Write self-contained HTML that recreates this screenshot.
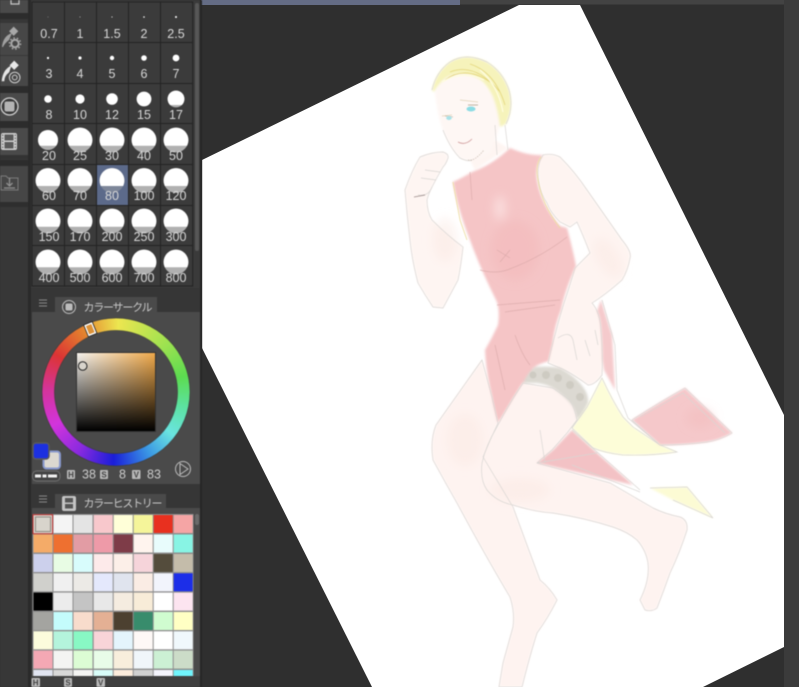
<!DOCTYPE html>
<html><head><meta charset="utf-8"><style>
html,body{margin:0;padding:0;width:799px;height:687px;overflow:hidden;background:#2f2f2f}
svg{position:absolute;left:0;top:0}
#panel{position:absolute;left:0;top:0;width:202px;height:687px;overflow:hidden;filter:blur(.4px)}
.wheel{position:absolute;left:42px;top:318px;width:148px;height:148px;border-radius:50%;background:conic-gradient(from 2deg,#ece650,#9ce250 45deg,#5cdc50 75deg,#5ce2a0 100deg,#6ae4e0 125deg,#3a96e4 150deg,#1a1ed8 180deg,#8a2ae0 210deg,#d234dc 240deg,#d4349a 270deg,#dc3434 300deg,#e4842e 330deg,#ece650);-webkit-mask:radial-gradient(circle,transparent 61px,#000 62px);mask:radial-gradient(circle,transparent 61px,#000 62px)}
.sq{position:absolute;left:77px;top:353px;width:78px;height:78px;background:linear-gradient(to bottom,transparent,#000),linear-gradient(to right,#f6f3ee,#f0a94a);box-shadow:0 0 0 1px #333}
</style></head><body>
<svg width="799" height="687" viewBox="0 0 799 687">
<defs>
<filter id="b" x="-10%" y="-10%" width="120%" height="120%"><feGaussianBlur stdDeviation="1.3"/></filter>
<filter id="b2" x="-30%" y="-30%" width="160%" height="160%"><feGaussianBlur stdDeviation="5"/></filter>
<filter id="s" x="-5%" y="-5%" width="110%" height="110%"><feGaussianBlur stdDeviation=".4"/></filter>
<path id="dress" d="M453,182 Q462,178 472,172 Q492,165 510,148 Q528,156 543,155 Q535,165 537,180 Q541,205 560,226 L567,228 Q573,250 576,266 Q565,290 561,310 Q555,325 553,340 Q552,352 549,361 Q538,364 533,368 Q527,378 520,387 Q510,405 498,423 Q493,405 492,397 Q486,372 485,350 Q492,338 498,325 Q500,312 497,302 Q480,268 470,240 Q458,210 453,182 Z"/>
<path id="hair" d="M432,90 Q436,72 450,62 Q466,52 487,62 Q503,72 509,90 Q514,108 506,124 L500,127 Q498,110 493,97 Q486,82 476,77 Q460,70 446,78 Q438,84 434,92 Z"/>
<path id="face" d="M435,93 Q438,118 443,130 Q450,148 460,158 Q468,162 472,160 Q482,158 490,153 Q497,138 500,123 Q499,108 493,97 Q484,82 476,77 Q460,70 446,78 Q438,84 435,93 Z"/>
<path id="farleg" d="M482,360 Q455,398 436,425 Q430,440 433,460 Q445,482 457,503 Q485,555 510,597 Q515,612 513,627 Q508,645 503,663 L499,687 L522,687 Q530,655 537,633 Q548,618 557,600 Q550,588 540,580 Q525,540 513,507 L483,457 Q490,440 498,423 L492,397 Z"/>
<path id="thigh" d="M523,383 Q508,405 497,427 Q486,445 482,463 Q480,480 487,490 Q497,502 513,505 Q535,512 553,513 Q585,518 613,527 Q628,532 637,540 Q646,550 648,563 Q650,580 640,600 L645,610 Q652,612 657,608 Q664,590 670,573 Q680,552 687,530 Q688,520 680,517 Q665,514 653,508 L610,483 L537,463 L552,450 L567,433 L577,420 Q575,408 570,400 L553,388 Z"/>
<path id="arm" d="M543,155 Q552,153 560,157 Q575,172 587,190 L622,240 Q632,252 630,258 Q628,270 622,280 Q605,295 592,303 Q600,312 601,330 Q603,355 602,375 Q595,385 588,385 Q570,372 560,368 L548,363 Q552,345 555,335 Q560,315 565,300 Q570,285 575,268 Q583,260 590,253 Q583,235 577,222 L570,227 L560,222 Q550,212 547,203 Q538,190 538,173 Q538,162 543,155 Z"/>
<path id="larm" d="M405,190 Q412,170 420,157 Q432,152 443,152 Q449,154 448,158 Q446,164 443,167 Q437,177 432,187 Q428,195 427,200 Q427,212 432,220 Q448,236 463,247 Q461,265 458,280 Q450,295 443,308 L433,307 Q425,295 418,283 Q412,260 410,240 Q407,215 405,190 Z"/>
<path id="cloth" d="M632,420 Q660,402 685,388 Q710,412 732,433 Q720,440 707,442 Q685,445 660,445 Z"/>
<path id="yel" d="M602,378 Q612,400 623,417 L633,427 L660,445 L677,452 Q650,456 623,455 Q605,453 593,448 L572,428 L587,407 Z"/>
<path id="garter" d="M523,383 Q528,372 535,367 Q550,366 560,368 Q575,376 583,387 Q589,395 588,403 Q584,412 577,420 Q575,408 570,403 Q562,394 553,388 Q545,384 537,383 Z"/>
</defs>
<rect width="799" height="687" fill="#2f2f2f"/>
<polygon points="202,160 519,5 580,5 784,415 784,647 703,687 372,687 202,348" fill="#fff"/>
<rect x="201" y="0" width="598" height="4.5" fill="#434343"/>
<rect x="201" y="0" width="259" height="5" fill="#646c85"/>
<rect x="784" y="0" width="15" height="687" fill="#3b3b3b"/>

<!-- artwork -->
<g filter="url(#b)">
<use href="#yel" fill="#fdfdd8"/>
<polygon points="650,488 687,487 713,518 673,500" fill="#fcfbd4"/>
<use href="#cloth" fill="#f5c8ca"/>
<polygon points="572,430 597,453 633,485 620,482 537,463 553,450" fill="#f3c2c5"/>
<polygon points="601,300 612,335 615,390 604,370 600,345 590,330" fill="#f5cacc"/>
<use href="#farleg" fill="#fef3f0"/>
<use href="#dress" fill="#f5c5c6"/>
<use href="#thigh" fill="#fef3f0"/>
<use href="#arm" fill="#fef4f1"/>
<use href="#larm" fill="#fef5f2"/>
<polygon points="470,160 495,140 508,148 475,170" fill="#fef5f2"/>
<use href="#face" fill="#fef7f4"/>
<use href="#hair" fill="#f6f3bb"/>
<use href="#garter" fill="#dcd9d2"/>
</g>
<g fill="#cbc8bf" filter="url(#s)" opacity=".8">
<circle cx="533" cy="375" r="3.5"/><circle cx="546" cy="375" r="4"/><circle cx="558" cy="378" r="4"/><circle cx="570" cy="385" r="4"/><circle cx="580" cy="397" r="4"/>
</g>
<g filter="url(#b2)">
<ellipse cx="515" cy="250" rx="24" ry="30" fill="#f1b6b8" opacity=".45"/>
<ellipse cx="500" cy="208" rx="5" ry="12" fill="#fbe0e0"/>
<ellipse cx="445" cy="240" rx="12" ry="22" fill="#fbe9e3" opacity=".5"/>
<ellipse cx="608" cy="258" rx="11" ry="22" fill="#fbe9e3" opacity=".5" transform="rotate(-30 608 258)"/>
<ellipse cx="465" cy="440" rx="18" ry="26" fill="#fce9e4" opacity=".5"/>
<ellipse cx="520" cy="490" rx="30" ry="12" fill="#fce9e4" opacity=".5"/>
<ellipse cx="700" cy="418" rx="14" ry="10" fill="#f1b6b8" opacity=".35"/>
</g>
<g fill="none" stroke="#d9d6d3" stroke-width=".7" filter="url(#s)">
<use href="#farleg"/><use href="#thigh"/><use href="#arm"/><use href="#larm"/><use href="#cloth"/><use href="#yel"/>
<path d="M640,417 L683,393 L725,433 M650,488 L687,487 L713,518 L673,500"/>
<path d="M418,195 Q428,197 432,187 M425,170 L440,172 M421,178 L436,180"/>
<path d="M443,130 Q450,148 460,158 Q468,162 472,160 M495,125 L497,155 M505,125 L508,150"/>
<path d="M432,90 Q436,72 450,62 Q466,52 487,62 Q503,72 509,90 Q514,108 506,124"/>
<path d="M558,338 Q570,330 573,340 L577,360 M585,340 L590,356 M595,330 L598,345 M602,300 L615,345 L617,390 L628,418 L660,445"/>
<path d="M540,430 L545,463 M537,463 L597,453 M572,430 L640,490 M572,465 L640,492"/>
</g>
<g fill="none" stroke="#d8a8a8" stroke-width=".7" filter="url(#s)" opacity=".8">
<path d="M470,172 L472,200 M480,270 Q495,274 507,270 Q540,258 567,237 M497,305 L560,300 M505,312 L555,305 M495,345 L505,390 M515,335 Q522,355 530,365 M497,250 L510,258 M500,262 L510,250"/>
</g>
<g fill="none" stroke-width=".8" filter="url(#s)">
<path d="M445,80 Q465,65 490,82 M450,72 Q475,62 500,92 M470,64 Q495,72 505,105" stroke="#e4d67c"/>
<path d="M442,82 Q462,70 484,80 M480,70 Q498,85 503,112" stroke="#fffde0" stroke-width="1.2"/>
<path d="M453,182 L460,220 L467,240" stroke="#ecdc9c"/>
<path d="M541,157 Q535,165 538,180 Q542,205 560,228" stroke="#ecdc9c"/>
<path d="M414,197 L425,195" stroke="#9a8a88"/>
<path d="M458,142 Q465,146 472,139" stroke="#cf9a9a"/>
<path d="M442,116 L452,115 M460,100 L478,102" stroke="#e0d2b8"/>
<path d="M468,105 L478,105" stroke="#b0a090"/>
<path d="M445,116 L453,117" stroke="#b0a090" stroke-width=".6"/>
<path d="M468,160 Q474,162 484,150" stroke="#cfc2b8" stroke-dasharray="1.5 1"/>
</g>
<g filter="url(#s)"><ellipse cx="471" cy="109" rx="4.5" ry="2.5" fill="#8cdce4"/>
<ellipse cx="449" cy="118" rx="2.8" ry="2" fill="#a9e2e8"/></g>
</svg>

<div id="panel">
<svg width="202" height="687" viewBox="0 0 202 687" font-family="'Liberation Sans','Noto Sans CJK JP',sans-serif">
<defs>
<clipPath id="c3"><rect x="160" y="85" width="33" height="20"/></clipPath>
<clipPath id="c4"><rect x="30" y="120" width="165" height="25.7"/></clipPath>
<clipPath id="c5"><rect x="30" y="165" width="165" height="21"/></clipPath>
<clipPath id="c6"><rect x="30" y="206" width="165" height="20.7"/></clipPath>
<clipPath id="c7"><rect x="30" y="246" width="165" height="21.3"/></clipPath>
</defs>
<rect x="0" y="0" width="202" height="687" fill="#383838"/>

<!-- left toolbar -->
<rect x="0" y="0" width="28" height="687" fill="#373737"/>
<rect x="28" y="0" width="3" height="687" fill="#2a2a2a"/>
<rect x="0" y="0" width="28" height="13" fill="#4a4a4a"/>
<rect x="0" y="13" width="28" height="6" fill="#2c2c2c"/>
<rect x="0" y="23" width="28" height="32" fill="#474747"/>
<rect x="0" y="56" width="28" height="30" fill="#474747"/>
<rect x="0" y="86" width="28" height="7" fill="#2c2c2c"/>
<rect x="0" y="93" width="28" height="28" fill="#4a4a4a"/>
<rect x="0" y="121" width="28" height="7" fill="#2c2c2c"/>
<rect x="0" y="128" width="28" height="27" fill="#4a4a4a"/>
<rect x="0" y="155" width="28" height="4" fill="#333"/>
<rect x="0" y="160" width="28" height="6" fill="#2c2c2c"/>
<rect x="0" y="166" width="28" height="36" fill="#464646"/>
<rect x="0" y="202" width="28" height="5" fill="#2e2e2e"/>
<!-- toolbar icons -->
<path d="M11,0 L11,4 L19,4 L19,0" stroke="#c8c8c8" stroke-width="1.2" fill="none"/>
<path d="M2,47 Q3,36 12,33 L9,40 Q5,43 3,47 Z" fill="#a0a0a0"/>
<rect x="10.5" y="28" width="6.5" height="6.5" transform="rotate(45 13.7 31.2)" fill="#a8a8a8"/>
<circle cx="15" cy="43.5" r="3.7" fill="none" stroke="#a8a8a8" stroke-width="2"/>
<circle cx="15" cy="43.5" r="5.6" fill="none" stroke="#a8a8a8" stroke-width="1.4" stroke-dasharray="1.6 1.9"/>
<path d="M2,81 Q3,70 11,66 L9,72 Q4,76 4,81 Z" fill="#e4e4e4" stroke="#e4e4e4" stroke-width=".6"/>
<rect x="11" y="62" width="6.5" height="6.5" transform="rotate(45 14.2 65.2)" fill="#e8e8e8"/>
<circle cx="14.7" cy="77.5" r="5.3" fill="#444" stroke="#cfcfcf" stroke-width="1"/>
<circle cx="14.7" cy="77.5" r="2.4" fill="none" stroke="#cfcfcf"/>
<circle cx="9.5" cy="106.5" r="8.5" fill="#3a3a3a" stroke="#cfcfcf" stroke-width="1.3"/>
<rect x="4.5" y="101.5" width="10" height="10" rx="2" fill="#b4b4b4"/>
<rect x="1" y="133" width="16" height="17" rx="2" fill="#cfcfcf"/>
<rect x="4.5" y="134.5" width="9" height="6" fill="#5a5a5a"/><rect x="4.5" y="142" width="9" height="6.5" fill="#5a5a5a"/>
<path d="M2.7,134.5 V149 M15.3,134.5 V149" stroke="#6a6a6a" stroke-width="1.2" stroke-dasharray="1.5 1.5"/>
<path d="M1,176 L1,190 L18,190 L18,178 L8,178 L6,176 Z" fill="none" stroke="#7c7c7c" stroke-width="1"/>
<path d="M9.5,178 V186 M6.5,183 L9.5,186 L12.5,183 M4,188 H15" fill="none" stroke="#909090" stroke-width="1.3"/>

<!-- brush panel -->
<rect x="31" y="0" width="170" height="296" fill="#3a3a3a"/>
<rect x="195" y="3" width="4" height="248" rx="2" fill="#575757"/>
<rect x="32" y="2" width="160.7" height="284" fill="#3b3b3b" stroke="#232323" stroke-width="1"/>
<path d="M64.5,2 V286 M96.5,2 V286 M128.5,2 V286 M160.5,2 V286 M32,42.5 H193 M32,83.5 H193 M32,123.5 H193 M32,164.5 H193 M32,205.5 H193 M32,245.5 H193" stroke="#232323" stroke-width="1"/>
<rect x="97" y="165" width="31" height="40" fill="#5c6a8a"/>

<g fill="#fff">
<circle cx="48" cy="17" r=".4" opacity=".6"/><circle cx="80" cy="17" r=".5" opacity=".7"/><circle cx="112" cy="17" r=".6" opacity=".8"/><circle cx="144" cy="17" r=".8"/><circle cx="176" cy="17" r="1"/>
<circle cx="48" cy="58" r="1.1"/><circle cx="80" cy="58" r="1.6"/><circle cx="112" cy="58" r="2.2"/><circle cx="144" cy="58" r="2.8"/><circle cx="176" cy="58" r="3.4"/>
<circle cx="48" cy="99" r="3.8"/><circle cx="80" cy="99" r="4.6"/><circle cx="112" cy="99" r="5.8"/><circle cx="144" cy="99" r="7.4"/>
</g>
<circle cx="176" cy="99" r="8.4" fill="#b0b0b0"/>
<circle cx="176" cy="99" r="8.4" fill="#fff" clip-path="url(#c3)"/>
<g fill="#b0b0b0">
<circle cx="48" cy="140" r="10"/><circle cx="80" cy="140" r="12.4"/><circle cx="112" cy="140" r="12.4"/><circle cx="144" cy="140" r="12.4"/><circle cx="176" cy="140" r="12.4"/>
<circle cx="48" cy="180.5" r="12.4"/><circle cx="80" cy="180.5" r="12.4"/><circle cx="112" cy="180.5" r="12.4"/><circle cx="144" cy="180.5" r="12.4"/><circle cx="176" cy="180.5" r="12.4"/>
<circle cx="48" cy="221" r="12.4"/><circle cx="80" cy="221" r="12.4"/><circle cx="112" cy="221" r="12.4"/><circle cx="144" cy="221" r="12.4"/><circle cx="176" cy="221" r="12.4"/>
<circle cx="48" cy="262" r="12.4"/><circle cx="80" cy="262" r="12.4"/><circle cx="112" cy="262" r="12.4"/><circle cx="144" cy="262" r="12.4"/><circle cx="176" cy="262" r="12.4"/>
</g>
<g fill="#fff" clip-path="url(#c4)"><circle cx="48" cy="140" r="10"/><circle cx="80" cy="140" r="12.4"/><circle cx="112" cy="140" r="12.4"/><circle cx="144" cy="140" r="12.4"/><circle cx="176" cy="140" r="12.4"/></g>
<g fill="#fff" clip-path="url(#c5)"><circle cx="48" cy="180.5" r="12.4"/><circle cx="80" cy="180.5" r="12.4"/><circle cx="112" cy="180.5" r="12.4"/><circle cx="144" cy="180.5" r="12.4"/><circle cx="176" cy="180.5" r="12.4"/></g>
<g fill="#fff" clip-path="url(#c6)"><circle cx="48" cy="221" r="12.4"/><circle cx="80" cy="221" r="12.4"/><circle cx="112" cy="221" r="12.4"/><circle cx="144" cy="221" r="12.4"/><circle cx="176" cy="221" r="12.4"/></g>
<g fill="#fff" clip-path="url(#c7)"><circle cx="48" cy="262" r="12.4"/><circle cx="80" cy="262" r="12.4"/><circle cx="112" cy="262" r="12.4"/><circle cx="144" cy="262" r="12.4"/><circle cx="176" cy="262" r="12.4"/></g>
<rect x="100" y="186" width="24" height="17" fill="#5c6a8a" opacity=".6"/>

<g fill="#d8d8d8" font-size="12.5" text-anchor="middle">
<text x="49" y="38">0.7</text><text x="80" y="38">1</text><text x="112" y="38">1.5</text><text x="144" y="38">2</text><text x="176" y="38">2.5</text>
<text x="49" y="78">3</text><text x="80" y="78">4</text><text x="112" y="78">5</text><text x="144" y="78">6</text><text x="176" y="78">7</text>
<text x="49" y="119">8</text><text x="80" y="119">10</text><text x="112" y="119">12</text><text x="144" y="119">15</text><text x="176" y="119">17</text>
<text x="49" y="160">20</text><text x="80" y="160">25</text><text x="112" y="160">30</text><text x="144" y="160">40</text><text x="176" y="160">50</text>
<text x="49" y="200">60</text><text x="80" y="200">70</text><text x="112" y="200">80</text><text x="144" y="200">100</text><text x="176" y="200">120</text>
<text x="49" y="241">150</text><text x="80" y="241">170</text><text x="112" y="241">200</text><text x="144" y="241">250</text><text x="176" y="241">300</text>
<text x="49" y="282">400</text><text x="80" y="282">500</text><text x="112" y="282">600</text><text x="144" y="282">700</text><text x="176" y="282">800</text>
</g>

<!-- colour panel -->
<rect x="31" y="288" width="170" height="400" fill="#363636"/>
<rect x="55" y="297" width="102" height="16" fill="#4a4a4a"/>
<rect x="32" y="312" width="168" height="172" fill="#4a4a4a"/>
<path d="M39,300 H47 M39,303 H47 M39,306 H47" stroke="#8a8a8a" stroke-width="1"/>
<circle cx="69" cy="307" r="6.5" fill="none" stroke="#bdbdbd" stroke-width="1"/>
<rect x="65.5" y="303.5" width="7" height="7" rx="1.5" fill="#bdbdbd"/>
<text x="83.5" y="311" font-size="11" fill="#c8c8c8" textLength="69">カラーサークル</text>
</svg>

<div class="wheel"></div>
<div class="sq"></div>

<svg width="202" height="687" viewBox="0 0 202 687" font-family="'Liberation Sans','Noto Sans CJK JP',sans-serif">
<circle cx="116" cy="392" r="74" fill="none" stroke="#3a3a3a" stroke-width="1" opacity=".6"/>
<circle cx="116" cy="392" r="61.5" fill="none" stroke="#3a3a3a" stroke-width="1" opacity=".6"/>
<rect x="85.2" y="322.5" width="10" height="13.5" transform="rotate(-22 90 329)" fill="#222"/>
<rect x="86" y="323.3" width="8.4" height="11.9" transform="rotate(-22 90 329)" fill="#fff"/>
<rect x="87.3" y="324.8" width="5.8" height="8.9" transform="rotate(-22 90 329)" fill="#dc9238"/>
<circle cx="82.7" cy="366" r="4.3" fill="#d8d4cc" stroke="#222" stroke-width="1"/>

<!-- fg/bg swatches -->
<rect x="43.5" y="451.5" width="16.5" height="17" rx="3" fill="#dcd8d0" stroke="#8898cc" stroke-width="2"/>
<rect x="33" y="443" width="16" height="16" rx="3" fill="#1c30e0" stroke="#5a5a5a" stroke-width="1.5"/>
<rect x="32.5" y="471" width="27.5" height="10" rx="4" fill="#444" stroke="#707070"/>
<path d="M35,476 H57" stroke="#f2f2f2" stroke-width="3" stroke-dasharray="6 1.5 4 1.5 9"/>

<!-- HSV -->
<g fill="#b8b8b8"><rect x="67" y="470" width="8" height="9" rx="1"/><rect x="100" y="470" width="8" height="9" rx="1"/><rect x="132" y="470" width="8.5" height="9" rx="1"/></g>
<g font-size="8" fill="#444" text-anchor="middle" font-weight="bold"><text x="71" y="477.7">H</text><text x="104" y="477.7">S</text><text x="136.3" y="477.7">V</text></g>
<g font-size="12.5" fill="#cccccc"><text x="82" y="478.5">38</text><text x="119" y="478.5">8</text><text x="147" y="478.5">83</text></g>
<circle cx="183" cy="469" r="7.5" fill="none" stroke="#bbb" stroke-width="1"/>
<path d="M180,463.5 L188,469 L180,474.5 Z" fill="none" stroke="#bbb" stroke-width="1"/>

<!-- history panel -->
<rect x="55" y="494" width="111" height="15" fill="#4a4a4a"/>
<rect x="32" y="508" width="168" height="168" fill="#4a4a4a"/>
<path d="M39,496 H47 M39,499 H47 M39,502 H47" stroke="#8a8a8a" stroke-width="1"/>
<rect x="62" y="496" width="14" height="15" rx="2" fill="#c4c4c4"/>
<rect x="65" y="498" width="8" height="4.5" fill="#555"/><rect x="65" y="504" width="8" height="4.5" fill="#555"/>
<text x="83.5" y="507" font-size="11" fill="#c8c8c8" textLength="79">カラーヒストリー</text>
<rect x="195" y="514" width="4" height="11" rx="2" fill="#6a6a6a"/>

<rect x="32.5" y="514" width="161" height="162" fill="#8e8e8e"/>
<rect x="53.5" y="515" width="19" height="18" fill="#f4f4f4"/><rect x="73.5" y="515" width="19" height="18" fill="#e4e4e4"/><rect x="93.7" y="515" width="19" height="18" fill="#f8c8cc"/><rect x="113.7" y="515" width="19" height="18" fill="#ffffd8"/><rect x="133.7" y="515" width="19" height="18" fill="#f5f59a"/><rect x="153.7" y="515" width="19" height="18" fill="#e8301f"/><rect x="173.7" y="515" width="19" height="18" fill="#f5a5a5"/>
<rect x="33.5" y="534.5" width="19" height="18" fill="#f4ab68"/><rect x="53.5" y="534.5" width="19" height="18" fill="#ee7030"/><rect x="73.5" y="534.5" width="19" height="18" fill="#e29ca4"/><rect x="93.7" y="534.5" width="19" height="18" fill="#ee9aa8"/><rect x="113.7" y="534.5" width="19" height="18" fill="#7e3c48"/><rect x="133.7" y="534.5" width="19" height="18" fill="#fff4ee"/><rect x="153.7" y="534.5" width="19" height="18" fill="#e8fcfc"/><rect x="173.7" y="534.5" width="19" height="18" fill="#88f4e4"/>
<rect x="33.5" y="554" width="19" height="18" fill="#ccd0ec"/><rect x="53.5" y="554" width="19" height="18" fill="#e8fce4"/><rect x="73.5" y="554" width="19" height="18" fill="#d8fcfc"/><rect x="93.7" y="554" width="19" height="18" fill="#fdeaea"/><rect x="113.7" y="554" width="19" height="18" fill="#fcefe8"/><rect x="133.7" y="554" width="19" height="18" fill="#f6d4da"/><rect x="153.7" y="554" width="19" height="18" fill="#544c3c"/><rect x="173.7" y="554" width="19" height="18" fill="#c4bcaa"/>
<rect x="33.5" y="573.3" width="19" height="18" fill="#d0d0cc"/><rect x="53.5" y="573.3" width="19" height="18" fill="#f0f0f0"/><rect x="73.5" y="573.3" width="19" height="18" fill="#eceae6"/><rect x="93.7" y="573.3" width="19" height="18" fill="#e4e8fc"/><rect x="113.7" y="573.3" width="19" height="18" fill="#e0e4ee"/><rect x="133.7" y="573.3" width="19" height="18" fill="#faece4"/><rect x="153.7" y="573.3" width="19" height="18" fill="#f2f4fc"/><rect x="173.7" y="573.3" width="19" height="18" fill="#1c2ee8"/>
<rect x="33.5" y="592.6" width="19" height="18" fill="#000"/><rect x="53.5" y="592.6" width="19" height="18" fill="#ececec"/><rect x="73.5" y="592.6" width="19" height="18" fill="#c4c4c4"/><rect x="93.7" y="592.6" width="19" height="18" fill="#e8e8e8"/><rect x="113.7" y="592.6" width="19" height="18" fill="#f5ece0"/><rect x="133.7" y="592.6" width="19" height="18" fill="#f8ecd8"/><rect x="153.7" y="592.6" width="19" height="18" fill="#fff"/><rect x="173.7" y="592.6" width="19" height="18" fill="#fce4f0"/>
<rect x="33.5" y="612" width="19" height="18" fill="#a4a4a0"/><rect x="53.5" y="612" width="19" height="18" fill="#c4fcfc"/><rect x="73.5" y="612" width="19" height="18" fill="#f8dccc"/><rect x="93.7" y="612" width="19" height="18" fill="#e4b094"/><rect x="113.7" y="612" width="19" height="18" fill="#4c4030"/><rect x="133.7" y="612" width="19" height="18" fill="#388c6c"/><rect x="153.7" y="612" width="19" height="18" fill="#d0fcd0"/><rect x="173.7" y="612" width="19" height="18" fill="#ffffc4"/>
<rect x="33.5" y="631.3" width="19" height="18" fill="#fcfcdc"/><rect x="53.5" y="631.3" width="19" height="18" fill="#b4f4dc"/><rect x="73.5" y="631.3" width="19" height="18" fill="#88f8c4"/><rect x="93.7" y="631.3" width="19" height="18" fill="#f8d4d8"/><rect x="113.7" y="631.3" width="19" height="18" fill="#e4f4fc"/><rect x="133.7" y="631.3" width="19" height="18" fill="#fef8f6"/><rect x="153.7" y="631.3" width="19" height="18" fill="#fff"/><rect x="173.7" y="631.3" width="19" height="18" fill="#f0f8fc"/>
<rect x="33.5" y="650.6" width="19" height="18" fill="#f4a8b4"/><rect x="53.5" y="650.6" width="19" height="18" fill="#f4f4f2"/><rect x="73.5" y="650.6" width="19" height="18" fill="#dcfcd4"/><rect x="93.7" y="650.6" width="19" height="18" fill="#e8fce8"/><rect x="113.7" y="650.6" width="19" height="18" fill="#f8eedc"/><rect x="133.7" y="650.6" width="19" height="18" fill="#f0f6fa"/><rect x="153.7" y="650.6" width="19" height="18" fill="#ccf0d4"/><rect x="173.7" y="650.6" width="19" height="18" fill="#ccdcc8"/>
<rect x="33.5" y="670" width="19" height="6" fill="#e0e4f0"/><rect x="53.5" y="670" width="19" height="6" fill="#d8d8d8"/><rect x="73.5" y="670" width="19" height="6" fill="#f4f4f2"/><rect x="93.7" y="670" width="19" height="6" fill="#d8fcf8"/><rect x="113.7" y="670" width="19" height="6" fill="#fcecdc"/><rect x="133.7" y="670" width="19" height="6" fill="#d0d0d0"/><rect x="153.7" y="670" width="19" height="6" fill="#f4f4fc"/><rect x="173.7" y="670" width="19" height="6" fill="#70f4fc"/>
<rect x="33" y="514.7" width="19.6" height="19" fill="#d8d4cc" stroke="#c03030" stroke-width="1"/>
<rect x="35.5" y="517" width="15" height="14.5" fill="none" stroke="#8e8a82" stroke-width="1"/>

<rect x="31" y="676" width="170" height="11" fill="#3f3f3f"/>
<g fill="#b8b8b8"><rect x="31.5" y="678" width="8.5" height="9" rx="1"/><rect x="64" y="678" width="8" height="9" rx="1"/><rect x="96.5" y="678" width="8.5" height="9" rx="1"/></g>
<g font-size="8" fill="#444" text-anchor="middle" font-weight="bold"><text x="35.7" y="685.7">H</text><text x="68" y="685.7">S</text><text x="100.7" y="685.7">V</text></g>
<rect x="200" y="0" width="2" height="687" fill="#262626"/>
</svg>
</div>
</body></html>
